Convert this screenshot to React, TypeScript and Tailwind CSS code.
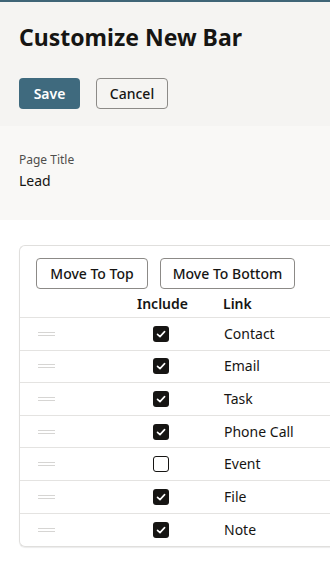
import React from 'react';

const links = [
  { name: 'Contact', on: true },
  { name: 'Email', on: true },
  { name: 'Task', on: true },
  { name: 'Phone Call', on: true },
  { name: 'Event', on: false },
  { name: 'File', on: true },
  { name: 'Note', on: true },
];

const Check = ({ on }: { on: boolean }) =>
  on ? (
    <span className="block w-4 h-4 shrink-0 rounded-[3px] bg-[#161513] flex items-center justify-center">
      <svg width="12" height="12" viewBox="0 0 12 12" fill="none">
        <path d="M2.5 6.3 L5 8.6 L9.6 3.6" stroke="white" strokeWidth="1.6" strokeLinecap="round" strokeLinejoin="round" />
      </svg>
    </span>
  ) : (
    <span className="block w-4 h-4 shrink-0 rounded-[3px] border border-[#161513] bg-white" />
  );

const App: React.FC = () => {
  return (
    <div className="w-[330px] h-[561px] overflow-hidden bg-white text-[#161513] font-['Noto_Sans',sans-serif]">
      <div className="h-[2px] bg-[#3f6577]" />
      <div className="bg-[#f5f4f2] px-[19px] pt-[20px] pb-[17px]">
        <h1 className="text-[23px] leading-[30px] font-bold">Customize New Bar</h1>
        <div className="flex gap-4 mt-[26px]">
          <button className="h-[31px] w-[61px] rounded bg-[#3f6a7e] text-white text-sm font-semibold">Save</button>
          <button className="h-[31px] w-[72px] rounded border border-[#8c8a87] text-sm font-medium">Cancel</button>
        </div>
      </div>
      <div className="bg-[#f9f8f6] px-[19px] pt-[26px] pb-[28px] h-[94px]">
        <div className="text-xs text-[#4f4e4c]">Page Title</div>
        <div className="text-sm mt-[3px]">Lead</div>
      </div>
      <div className="pl-[19px] pt-[25px]">
        <div className="border border-r-0 border-[#e0dfdd] rounded-l-md shadow-[0_1px_1px_rgba(0,0,0,0.08)] w-[330px]">
          <div className="flex gap-3 pl-[16px] pt-[12px]">
            <button className="h-[31px] w-[112px] rounded border border-[#8c8a87] text-sm font-medium">Move To Top</button>
            <button className="h-[31px] w-[135px] rounded border border-[#8c8a87] text-sm font-medium">Move To Bottom</button>
          </div>
          <div className="flex h-[29px] items-center pt-[2px] text-sm font-semibold border-b border-[#e4e3e1]">
            <div className="w-[117px]" />
            <div className="w-[86px]">Include</div>
            <div>Link</div>
          </div>
          {links.map((l, i) => (
            <div key={l.name} className={`flex h-[32.6px] items-center text-sm ${i < links.length - 1 ? 'border-b border-[#e4e3e1]' : ''}`}>
              <div className="w-[133px] pl-[18px]">
                <div className="w-[17px] flex flex-col gap-[2px]">
                  <div className="h-px bg-[#d6d5d3]" />
                  <div className="h-px bg-[#d6d5d3]" />
                </div>
              </div>
              <div className="w-[71px]">
                <Check on={l.on} />
              </div>
              <div>{l.name}</div>
            </div>
          ))}
        </div>
      </div>
    </div>
  );
};

export default App;
